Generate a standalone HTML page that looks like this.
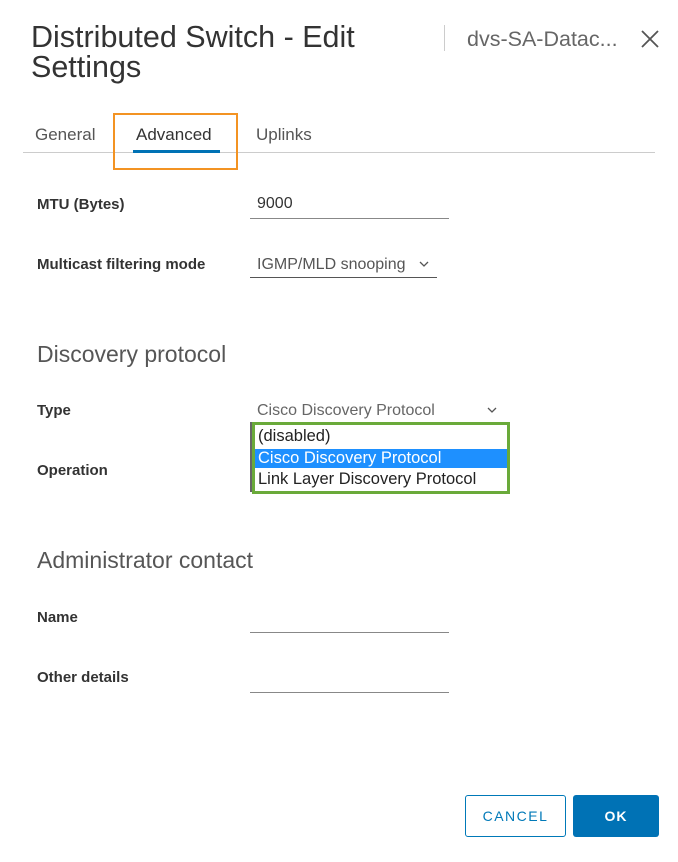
<!DOCTYPE html>
<html><head><style>
body{margin:0;width:678px;height:862px;background:#fff;font-family:"Liberation Sans",sans-serif;position:relative;overflow:hidden;color:#333}
div,span{position:absolute;white-space:nowrap}
.lbl{left:37px;font-size:15px;font-weight:bold;color:#333}
.ul{height:1px;background:#555}
</style></head><body>
<div style="left:31px;top:22px;font-size:30.5px;line-height:30px;color:#333">Distributed Switch - Edit<br>Settings</div>
<div style="left:444px;top:25px;width:1px;height:26px;background:#ccc"></div>
<div style="left:467px;top:27px;font-size:21.5px;color:#666">dvs-SA-Datac...</div>
<svg style="position:absolute;left:641px;top:30px" width="18" height="18"><path d="M1 1L17 17M17 1L1 17" stroke="#555" stroke-width="1.8"/></svg>
<div style="left:35px;top:125px;font-size:17px;color:#555">General</div>
<div style="left:136px;top:125px;font-size:17px;color:#333">Advanced</div>
<div style="left:256px;top:125px;font-size:17px;color:#555">Uplinks</div>
<div style="left:23px;top:152px;width:632px;height:1px;background:#ccc"></div>
<div style="left:133px;top:150px;width:87px;height:3px;background:#0072b5"></div>
<div style="left:113px;top:113px;width:121px;height:53px;border:2px solid #f39323"></div>
<div class="lbl" style="top:196px">MTU (Bytes)</div>
<div style="left:257px;top:195px;font-size:16px;color:#333">9000</div>
<div class="ul" style="left:250px;top:218px;width:199px;background:#888"></div>
<div class="lbl" style="top:256px">Multicast filtering mode</div>
<div style="left:257px;top:256px;font-size:16px;color:#555">IGMP/MLD snooping</div>
<svg style="position:absolute;left:419px;top:260px" width="10" height="8"><path d="M1 2L5 6L9 2" stroke="#555" stroke-width="1.3" fill="none"/></svg>
<div class="ul" style="left:250px;top:277px;width:187px"></div>
<div style="left:37px;top:341px;font-size:23px;color:#565656">Discovery protocol</div>
<div class="lbl" style="top:402px">Type</div>
<div style="left:257px;top:402px;font-size:16px;color:#666">Cisco Discovery Protocol</div>
<svg style="position:absolute;left:487px;top:406px" width="10" height="8"><path d="M1 2L5 6L9 2" stroke="#555" stroke-width="1.3" fill="none"/></svg>
<div class="lbl" style="top:462px">Operation</div>
<div style="left:250px;top:422px;width:2px;height:70px;background:#666"></div>
<div style="left:252px;top:422px;width:252px;height:66px;border:3px solid #6aaa3a;background:#fff"></div>
<div style="left:255px;top:449px;width:252px;height:19px;background:#1e90ff"></div>
<div style="left:258px;top:427px;font-size:16.5px;color:#222">(disabled)</div>
<div style="left:258px;top:449px;font-size:16.5px;color:#fff">Cisco Discovery Protocol</div>
<div style="left:258px;top:470px;font-size:16.5px;color:#222">Link Layer Discovery Protocol</div>
<div style="left:37px;top:547px;font-size:23px;color:#565656">Administrator contact</div>
<div class="lbl" style="top:609px">Name</div>
<div class="ul" style="left:250px;top:632px;width:199px;background:#888"></div>
<div class="lbl" style="top:669px">Other details</div>
<div class="ul" style="left:250px;top:692px;width:199px;background:#888"></div>
<div style="left:465px;top:795px;width:99px;height:40px;border:1px solid #0079b8;border-radius:3px;color:#0079b8;font-size:14px;letter-spacing:1.5px;text-align:center;line-height:40px">CANCEL</div>
<div style="left:573px;top:795px;width:86px;height:42px;background:#0072b5;border-radius:3px;color:#fff;font-size:14px;font-weight:bold;letter-spacing:1px;text-align:center;line-height:42px">OK</div>
</body></html>
